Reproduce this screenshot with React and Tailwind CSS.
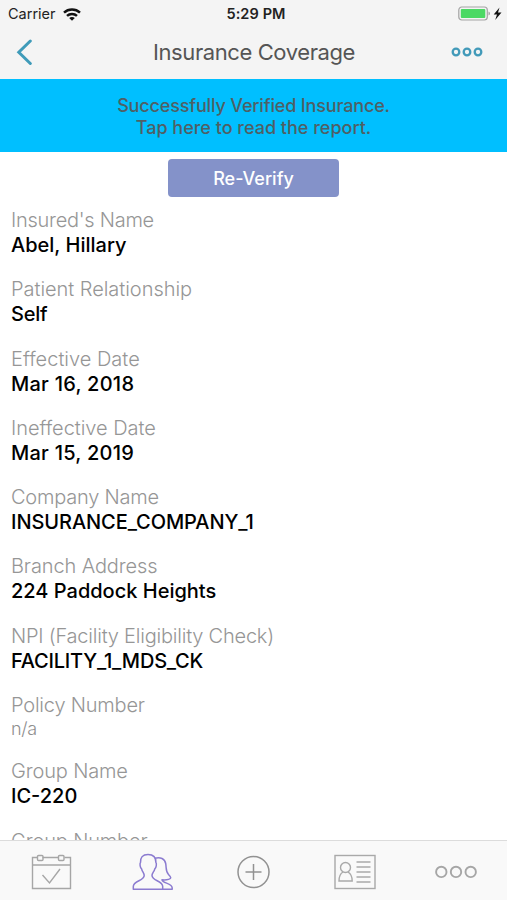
const fields = [
  { label: "Insured's Name", value: 'Abel, Hillary', labelTracking: 'tracking-[-0.26px]' },
  { label: 'Patient Relationship', value: 'Self', labelTracking: 'tracking-[-0.04px]', tracking: 'tracking-[-0.2px]' },
  { label: 'Effective Date', value: 'Mar 16, 2018', tracking: 'tracking-[0.25px]' },
  { label: 'Ineffective Date', value: 'Mar 15, 2019', labelTracking: 'tracking-[-0.04px]', tracking: 'tracking-[0.25px]' },
  { label: 'Company Name', value: 'INSURANCE_COMPANY_1', labelTracking: 'tracking-[-0.22px]', tracking: 'tracking-[-0.07px]' },
  { label: 'Branch Address', value: '224 Paddock Heights', labelTracking: 'tracking-[-0.12px]' },
  { label: 'NPI (Facility Eligibility Check)', value: 'FACILITY_1_MDS_CK', labelTracking: 'tracking-[-0.22px]', tracking: 'tracking-[-0.2px]' },
  { label: 'Policy Number', value: 'n/a', empty: true, labelTracking: 'tracking-[-0.2px]' },
  { label: 'Group Name', value: 'IC-220', labelTracking: 'tracking-[-0.15px]' },
  { label: 'Group Number', labelTracking: 'tracking-[-0.15px]' },
];

function StatusBar() {
  return (
    <div className="grid h-[26px] grid-cols-3 items-center pl-2 pr-[5px] pt-[2px] text-[14.5px] text-[#222]">
      <div className="flex items-center gap-[7px]">
        <span>Carrier</span>
        <svg className="h-[13px] w-[18px]" viewBox="0 0 18 13" fill="none" stroke="#111" strokeWidth="2.5">
          <path d="M1 4.600C5.500.500 12.500.500 17 4.600" />
          <path d="M4 7.900C6.800 5.300 11.200 5.300 14 7.900" />
          <path d="M6.200 10.100C7.800 8.600 10.200 8.600 11.800 10.100L9 12.800Z" fill="#111" stroke="none" />
        </svg>
      </div>
      <span className="pl-[2px] text-center font-semibold tracking-[0.1px]">5:29 PM</span>
      <svg className="h-4 w-[44px] justify-self-end" viewBox="0 0 44 16" fill="none">
        <rect x=".8" y="1" width="28.500" height="13" rx="3" stroke="#a3a3a3" strokeWidth="1.200" />
        <rect x="2.800" y="3" width="24.500" height="9" rx="1" fill="#4bd964" />
        <path d="M30.500 5.500v4c2-.8 2-3.200 0-4Z" fill="#a3a3a3" />
        <path d="M41.500 1.500L35.700 8.500h3.300l-1.800 5.500L43.500 6.500h-3.500Z" fill="#111" />
      </svg>
    </div>
  );
}

function NavBar() {
  return (
    <div className="grid h-[52px] grid-cols-[1fr_auto_1fr] items-center pl-4 pr-6">
      <svg className="h-[26px] w-4" viewBox="0 0 16 26" fill="none" stroke="#3f9bb9" strokeWidth="3" strokeLinecap="round">
        <path d="M14.300 2L2.800 13.300L14.300 24.500" />
      </svg>
      <h1 className="pl-[9px] text-[22px] leading-none tracking-[-0.4px] text-[#555]">Insurance Coverage</h1>
      <svg className="h-[10px] w-8 justify-self-end" viewBox="0 0 32 10" fill="none" stroke="#429ab9" strokeWidth="2.300">
        <circle cx="5" cy="5" r="3.300" />
        <circle cx="16" cy="5" r="3.300" />
        <circle cx="27" cy="5" r="3.300" />
      </svg>
    </div>
  );
}

function Field({ label, value, empty, labelTracking, tracking }) {
  return (
    <div className="mb-[19.3px]">
      <div className={`text-[20px] leading-[25px] font-light text-[#969696] ${labelTracking || ''}`}>{label}</div>
      {value && !empty && (
        <div className={`text-[20px] leading-[25px] font-medium text-black ${tracking || ''}`}>{value}</div>
      )}
      {empty && (
        <div className="text-[18px] leading-[22px] font-light tracking-[-0.3px] text-[#8f8f8f]">{value}</div>
      )}
    </div>
  );
}

function TabBar() {
  return (
    <div className="grid h-[60px] shrink-0 grid-cols-5 items-center justify-items-center border-t border-[#dcdcdc] bg-[#f9f9f9] pt-[3px]">
      {/* Calendar */}
      <svg className="h-[38px] w-[42px]" viewBox="0 0 42 38" fill="none" stroke="#a6a6a6" strokeWidth="1.400">
        <path d="M7.500 4.500H2.500V35.500H40.500V4.500H34.500M12.500 4.500H28.500M2.500 12H40.500" />
        <rect x="7.500" y="2.500" width="5.500" height="5" rx="1" />
        <rect x="28.500" y="2.500" width="5.500" height="5" rx="1" />
        <path d="M12.500 22L19.500 30L30 16" />
      </svg>
      {/* People */}
      <svg className="h-[38px] w-[42px]" viewBox="0 0 42 38" fill="none" stroke="#8b7bd0" strokeWidth="1.500" strokeLinejoin="round">
        <path d="M17 1.500C11.500 1.500 9.300 4.500 9.500 9.500C8.600 10.500 9 14.500 10.600 15.800C11.200 18.800 13.200 20 13.200 22.500C13.200 28 2.300 27.500 2.300 33.500V36.300H31.700V33.500C31.700 27.500 21 28 21 22.500C21 20 23.200 18.800 23.800 15.800C25.400 14.500 25.800 10.500 24.900 9.500C25.100 4.500 22.500 1.500 17 1.500Z" />
        <path d="M23.800 5.200C29.500 3.800 33.800 5.500 34.700 10.500C35.500 15 34.500 18.500 37.500 21.500C40.500 24.500 40.500 25.500 37.500 26.400C35.500 27 33.500 27 31 26.800C31.500 30.800 41.200 29.500 41.200 35V36.300H31.700" />
      </svg>
      {/* Add */}
      <svg className="h-[38px] w-[42px]" viewBox="0 0 42 38" fill="none" stroke="#929292" strokeWidth="1.500">
        <circle cx="21.500" cy="19" r="15.500" />
        <path d="M21.500 11V27M13.500 19H29.500" />
      </svg>
      {/* Contact card */}
      <svg className="h-[38px] w-[42px]" viewBox="0 0 42 38" fill="none" stroke="#a9a9a9" strokeWidth="1.400">
        <rect x="1" y="2.500" width="40" height="33" />
        <circle cx="11.500" cy="14.500" r="5" />
        <path d="M9 19C6.500 20.500 5 23 5 28H18.200C18.200 23 16.500 20.500 14 19" />
        <path d="M22.500 9H36.500M22.500 14H36.500M22.500 19H36.500M22.500 24H36.500M22.500 29H36.500" />
      </svg>
      {/* More */}
      <svg className="h-[38px] w-[42px]" viewBox="0 0 42 38" fill="none" stroke="#a6a6a6" strokeWidth="1.900">
        <circle cx="6.300" cy="18.900" r="5.200" />
        <circle cx="21" cy="18.900" r="5.200" />
        <circle cx="35.700" cy="18.900" r="5.200" />
      </svg>
    </div>
  );
}

export default function App() {
  return (
    <div className="flex h-[900px] w-[507px] flex-col overflow-hidden bg-white font-[Inter,sans-serif]">
      <header className="h-[79px] shrink-0 bg-[#f4f4f4]">
        <StatusBar />
        <NavBar />
      </header>

      <div className="flex h-[73px] shrink-0 flex-col justify-center bg-[#00bfff] pt-[2px] text-center text-[18px] leading-[22px] font-medium text-[#4f5f65]">
        <p className="tracking-[-0.16px]">Successfully Verified Insurance.</p>
        <p>Tap here to read the report.</p>
      </div>

      <main className="min-h-0 flex-1 overflow-hidden pt-[7px]">
        <button className="mx-auto block h-[38px] w-[171px] rounded-[4px] bg-[#8492c9] text-[18px] font-medium text-white">
          Re-Verify
        </button>
        <div className="pl-[11px] pt-[11px]">
          {fields.map((field) => (
            <Field key={field.label} {...field} />
          ))}
        </div>
      </main>

      <TabBar />
    </div>
  );
}
